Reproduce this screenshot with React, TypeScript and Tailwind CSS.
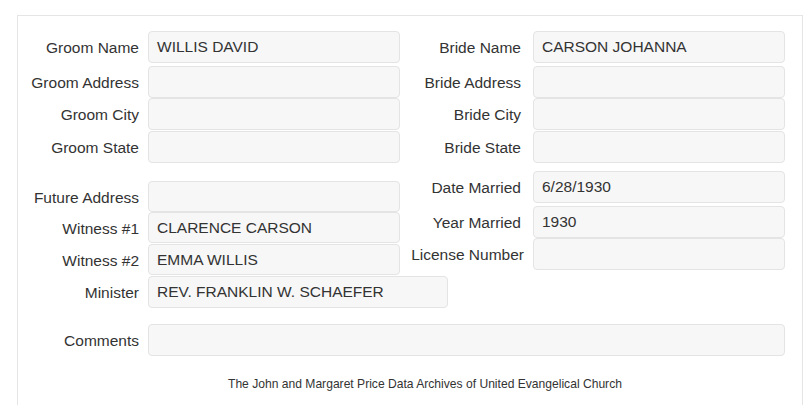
type Field = {
  label: string;
  value?: string;
  row: string; // spacing above the row
  box: string; // input height/width
  tag?: string; // extra label classes
};

const groom: Field[] = [
  { label: "Groom Name", value: "WILLIS DAVID", row: "mt-[15px]", box: "h-[32px] w-[252px]" },
  { label: "Groom Address", row: "mt-[3px]", box: "h-[32px] w-[252px]" },
  { label: "Groom City", row: "mt-0", box: "h-[32px] w-[252px]" },
  { label: "Groom State", row: "mt-px", box: "h-[32px] w-[252px]" },
  { label: "Future Address", row: "mt-[18px]", box: "h-[31px] w-[252px]" },
  { label: "Witness #1", value: "CLARENCE CARSON", row: "mt-0", box: "h-[31px] w-[252px]" },
  { label: "Witness #2", value: "EMMA WILLIS", row: "mt-px", box: "h-[31px] w-[252px]" },
  { label: "Minister", value: "REV. FRANKLIN W. SCHAEFER", row: "mt-px", box: "h-[32px] w-[300px]" },
];

const bride: Field[] = [
  { label: "Bride Name", value: "CARSON JOHANNA", row: "mt-[15px]", box: "h-[32px] w-[252px]" },
  { label: "Bride Address", row: "mt-[3px]", box: "h-[32px] w-[252px]" },
  { label: "Bride City", row: "mt-0", box: "h-[32px] w-[252px]" },
  { label: "Bride State", row: "mt-px", box: "h-[32px] w-[252px]" },
  { label: "Date Married", value: "6/28/1930", row: "mt-[8px]", box: "h-[32px] w-[252px]" },
  { label: "Year Married", value: "1930", row: "mt-[3px]", box: "h-[32px] w-[252px]" },
  // too long for the label column, spills a little to the right
  { label: "License Number", row: "mt-0", box: "h-[32px] w-[252px]", tag: "relative left-[3px]" },
];

function ReadOnlyBox({ value, box }: { value?: string; box: string }) {
  return (
    <div className={`${box} shrink-0 flex items-center pl-[8px] bg-[#f7f7f7] border border-[#e4e4e4] rounded-[4px] text-[#333] whitespace-nowrap`}>
      {value}
    </div>
  );
}

function FieldColumn({ fields, gap }: { fields: Field[]; gap: string }) {
  return (
    <div className="flex flex-col">
      {fields.map((f) => (
        <div key={f.label} className={`${f.row} flex items-center ${gap}`}>
          <label className={`w-[121px] shrink-0 pt-[2px] text-right whitespace-nowrap text-[#333] ${f.tag ?? ""}`}>
            {f.label}
          </label>
          <ReadOnlyBox value={f.value} box={f.box} />
        </div>
      ))}
    </div>
  );
}

export default function App() {
  return (
    <div
      className="min-h-screen bg-white pt-[15px] pl-[17px] pr-[2px] text-[15.5px] leading-[18px]"
      style={{ fontFamily: '"Liberation Sans", Arial, Helvetica, sans-serif' }}
    >
      <div className="border border-[#e5e5e5] pb-[30px]">
        <div className="flex">
          <div className="w-[382px]">
            <FieldColumn fields={groom} gap="gap-[9px]" />
          </div>
          <FieldColumn fields={bride} gap="gap-[12px]" />
        </div>

        <div className="mt-[16px] flex items-center gap-[9px]">
          <label className="w-[121px] shrink-0 pt-[2px] text-right text-[#333]">Comments</label>
          <ReadOnlyBox box="h-[32px] w-[637px]" />
        </div>

        <p className="mt-[21px] ml-[210px] text-[12.1px] leading-[14px] text-[#333]">
          The John and Margaret Price Data Archives of United Evangelical Church
        </p>
      </div>
    </div>
  );
}
